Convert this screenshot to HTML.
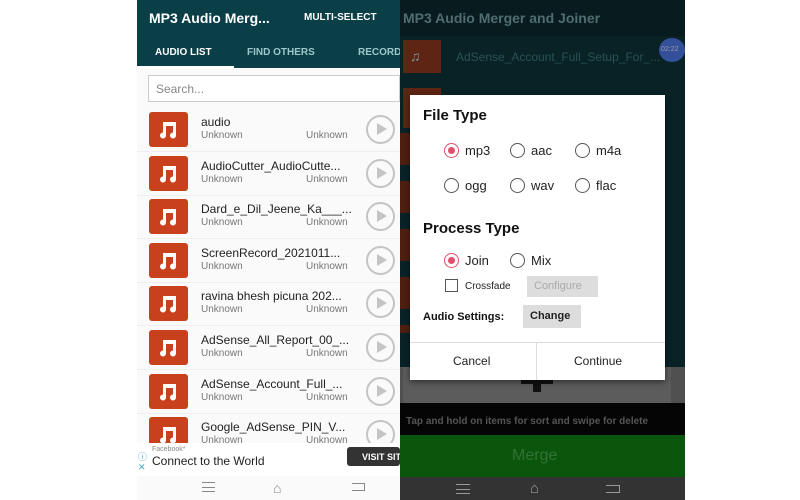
<!DOCTYPE html>
<html><head><meta charset="utf-8"><style>
*{margin:0;padding:0;box-sizing:border-box}
body{width:800px;height:500px;background:#fff;position:relative;overflow:hidden;font-family:"Liberation Sans",sans-serif}
.a{position:absolute;white-space:nowrap}
.ic{position:absolute;left:149px;width:39px;height:35px;background:#c8401c;border-radius:3px}
.ic svg{position:absolute;left:9px;top:7px}
.t{position:absolute;left:201px;font-size:12px;color:#222;white-space:nowrap}
.s{position:absolute;font-size:10px;color:#777}
.pl{position:absolute;left:366px;width:29px;height:29px;border:2.5px solid #c4c4c4;border-radius:50%}
.pl:after{content:"";position:absolute;left:9px;top:6px;border-left:10px solid #c4c4c4;border-top:6px solid transparent;border-bottom:6px solid transparent}
.rb{position:absolute;width:15px;height:15px;border:1.5px solid #555;border-radius:50%}
.rb.on{border-color:#e0506a}
.rb.on:after{content:"";position:absolute;left:2.5px;top:2.5px;width:7px;height:7px;border-radius:50%;background:#e0506a}
.lb{position:absolute;font-size:13px;color:#222}
</style></head><body>
<div class="a" style="left:137px;top:0;width:263px;height:68px;background:#0a3f48"></div>
<div class="a" style="left:149px;top:10px;font-size:14px;font-weight:bold;color:#fff">MP3 Audio Merg...</div>
<div class="a" style="left:304px;top:12px;font-size:10px;font-weight:bold;color:#fff">MULTI-SELECT</div>
<div class="a" style="left:155px;top:47px;font-size:10px;font-weight:bold;color:#fff">AUDIO LIST</div>
<div class="a" style="left:247px;top:47px;font-size:10px;font-weight:bold;color:#9cc7cc">FIND OTHERS</div>
<div class="a" style="left:358px;top:47px;font-size:10px;font-weight:bold;color:#9cc7cc">RECORD</div>
<div class="a" style="left:137px;top:66px;width:97px;height:3px;background:#fff"></div>
<div class="a" style="left:137px;top:69px;width:263px;height:406px;background:#fafafa"></div>
<div class="a" style="left:148px;top:75px;width:252px;height:27px;border:1px solid #ccc;background:#fff"></div>
<div class="a" style="left:156px;top:82px;font-size:12px;color:#888">Search...</div>
<div id="rows"></div>
<div class="a" style="left:137px;top:443px;width:263px;height:33px;background:#fff"></div>
<div class="a" style="left:152px;top:446px;font-size:7px;color:#888">Facebook*</div>
<div class="a" style="left:152px;top:454px;font-size:12px;color:#222">Connect to the World</div>
<div class="a" style="left:138px;top:452px;font-size:9px;color:#3aa6c8;line-height:10px">ⓘ<br>✕</div>
<div class="a" style="left:347px;top:447px;width:53px;height:19px;background:#333;border-radius:3px;color:#fff;font-size:9px;font-weight:bold;padding:5px 0 0 15px;overflow:hidden">VISIT SIT</div>
<div class="a" style="left:137px;top:476px;width:263px;height:24px;background:#fafafa"></div>
<div class="a" style="left:202px;top:482px;width:13px;height:10px;border-top:1px solid #888;border-bottom:1px solid #888"><div style="margin-top:4px;border-top:1px solid #888"></div></div>
<div class="a" style="left:273px;top:480px;font-size:14px;color:#888">⌂</div>
<div class="a" style="left:352px;top:483px;width:13px;height:8px;border:1px solid #888;border-left:none"></div>
<div class="a" style="left:400px;top:0;width:285px;height:36px;background:#081c1f"></div>
<div class="a" style="left:403px;top:10px;font-size:14px;font-weight:bold;color:#4f6d70">MP3 Audio Merger and Joiner</div>
<div class="a" style="left:400px;top:36px;width:285px;height:331px;background:#082226"></div>
<div class="a" style="left:403px;top:40px;width:38px;height:33px;background:#5e2414"></div>
<div class="a" style="left:403px;top:88px;width:38px;height:40px;background:#5e2414"></div>
<div class="a" style="left:400px;top:133px;width:10px;height:200px;background:repeating-linear-gradient(#4f1f12 0 32px,#082226 32px 48px)"></div>
<div class="a" style="left:410px;top:48px;font-size:14px;color:#7d9a9a">♫</div>
<div class="a" style="left:456px;top:50px;font-size:12px;color:#2a5254">AdSense_Account_Full_Setup_For_...</div>
<div class="a" style="left:659px;top:38px;width:26px;height:24px;border-radius:50%;background:#34509a;color:#99a;font-size:7px;padding:8px 0 0 2px">02:22</div>
<div class="a" style="left:400px;top:367px;width:285px;height:36px;background:#505050"></div>
<div class="a" style="left:403px;top:367px;width:268px;height:36px;background:#5c5c5c"></div>
<div class="a" style="left:521px;top:377px;width:32px;height:7px;background:#111"></div>
<div class="a" style="left:533px;top:370px;width:8px;height:22px;background:#111"></div>
<div class="a" style="left:400px;top:403px;width:285px;height:32px;background:#050505"></div>
<div class="a" style="left:406px;top:416px;font-size:10px;font-weight:bold;color:#555">Tap and hold on items for sort and swipe for delete</div>
<div class="a" style="left:400px;top:435px;width:285px;height:42px;background:#0a560c"></div>
<div class="a" style="left:512px;top:447px;font-size:16px;color:#357035">Merge</div>
<div class="a" style="left:400px;top:477px;width:285px;height:23px;background:#333"></div>
<div class="a" style="left:456px;top:484px;width:14px;height:10px;border-top:1px solid #999;border-bottom:1px solid #999"><div style="margin-top:4px;border-top:1px solid #999"></div></div>
<div class="a" style="left:530px;top:480px;font-size:15px;color:#999">⌂</div>
<div class="a" style="left:606px;top:485px;width:14px;height:8px;border:1px solid #999;border-left:none"></div>
<div class="a" style="left:410px;top:95px;width:255px;height:285px;background:#fff;box-shadow:0 2px 6px rgba(0,0,0,.5)"></div>
<div class="a" style="left:423px;top:107px;font-size:15px;font-weight:bold;color:#111">File Type</div>
<div class="rb on" style="left:444px;top:143px"></div><div class="lb" style="left:465px;top:143px">mp3</div>
<div class="rb" style="left:510px;top:143px"></div><div class="lb" style="left:531px;top:143px">aac</div>
<div class="rb" style="left:575px;top:143px"></div><div class="lb" style="left:596px;top:143px">m4a</div>
<div class="rb" style="left:444px;top:178px"></div><div class="lb" style="left:465px;top:178px">ogg</div>
<div class="rb" style="left:510px;top:178px"></div><div class="lb" style="left:531px;top:178px">wav</div>
<div class="rb" style="left:575px;top:178px"></div><div class="lb" style="left:596px;top:178px">flac</div>
<div class="a" style="left:423px;top:220px;font-size:15px;font-weight:bold;color:#111">Process Type</div>
<div class="rb on" style="left:444px;top:253px"></div><div class="lb" style="left:465px;top:253px">Join</div>
<div class="rb" style="left:510px;top:253px"></div><div class="lb" style="left:531px;top:253px">Mix</div>
<div class="a" style="left:445px;top:279px;width:13px;height:13px;border:1.5px solid #555"></div>
<div class="a" style="left:465px;top:281px;font-size:10px;color:#222">Crossfade</div>
<div class="a" style="left:527px;top:276px;width:71px;height:21px;background:#ddd;color:#aaa;font-size:11px;padding:4px 0 0 7px">Configure</div>
<div class="a" style="left:423px;top:311px;font-size:11px;font-weight:bold;color:#111">Audio Settings:</div>
<div class="a" style="left:523px;top:305px;width:58px;height:23px;background:#ddd;color:#222;font-size:11px;font-weight:bold;padding:5px 0 0 7px">Change</div>
<div class="a" style="left:410px;top:342px;width:255px;height:1px;background:#ddd"></div>
<div class="a" style="left:536px;top:342px;width:1px;height:38px;background:#ddd"></div>
<div class="a" style="left:453px;top:354px;font-size:12px;color:#222">Cancel</div>
<div class="a" style="left:574px;top:354px;font-size:12px;color:#222">Continue</div>
<script>
var d=[["audio","Unknown"],["AudioCutter_AudioCutte...","Unknown"],["Dard_e_Dil_Jeene_Ka___...","Unknown"],["ScreenRecord_2021011...","Unknown"],["ravina bhesh picuna 202...","Unknown"],["AdSense_All_Report_00_...","Unknown"],["AdSense_Account_Full_...","Unknown"],["Google_AdSense_PIN_V...","Unknown"]];
var h="";d.forEach(function(r,i){var y=112+i*43.6;
h+='<div class="ic" style="top:'+y+'px"><svg width="21" height="21" viewBox="0 0 21 21"><path d="M5 3h13v13.5a3 3 0 1 1-3-3V7H8v9.5a3 3 0 1 1-3-3z" fill="#fff"/></svg></div>';
h+='<div class="t" style="top:'+(y+3)+'px">'+r[0]+'</div><div class="s" style="left:201px;top:'+(y+18)+'px">Unknown</div><div class="s" style="left:306px;top:'+(y+18)+'px">Unknown</div>';
h+='<div class="pl" style="top:'+(y+3)+'px"></div>';
if(i<7)h+='<div class="a" style="left:137px;top:'+(y+39)+'px;width:263px;height:1px;background:#eee"></div>';});
document.getElementById("rows").innerHTML=h;
</script>
</body></html>
